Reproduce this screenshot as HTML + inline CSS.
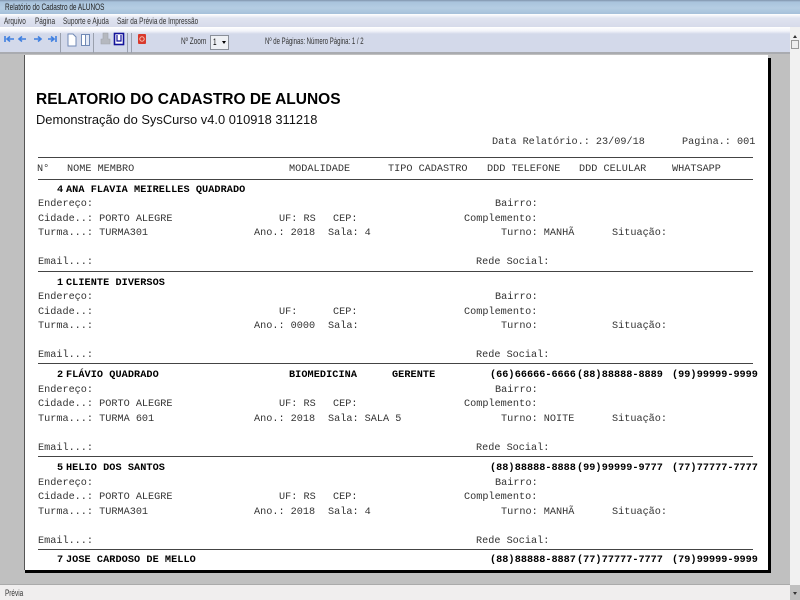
<!DOCTYPE html>
<html><head><meta charset="utf-8"><style>
html,body{margin:0;padding:0;width:800px;height:600px;overflow:hidden;background:#c0c0c0}
div,span{position:absolute}
.u{font:9.2px/12px "Liberation Sans",sans-serif;color:#333;white-space:pre;transform:scaleX(.7);transform-origin:0 0}
.m{font:10.2px/12px "Liberation Mono",monospace;color:#333;white-space:pre}
.r .m{transform:translateY(2px)}
.b{font-weight:bold;color:#000;letter-spacing:.07px}
.p{letter-spacing:0;word-spacing:-5.8px}
.l{height:1px;background:#444;left:13px;width:715px}
.r{left:0;top:0;width:744px;height:93px}
.sep{width:1px;height:20px;background:#9aa0ad;top:33px}
</style></head><body>
<div style="left:0;top:0;width:800px;height:14px;background:linear-gradient(#7f93ab 0,#a9c3dc 2px,#b5cde3 8px,#a5c0da 14px)"></div>
<span class="u" style="left:5px;top:1px;color:#222">Relatório do Cadastro de ALUNOS</span>
<div style="left:0;top:14px;width:800px;height:13px;background:linear-gradient(#fff,#e0e4f0 4px,#d6dbea)"></div>
<span class="u" style="left:4px;top:15px">Arquivo</span>
<span class="u" style="left:35px;top:15px">Página</span>
<span class="u" style="left:63px;top:15px">Suporte e Ajuda</span>
<span class="u" style="left:117px;top:15px">Sair da Prévia de Impressão</span>
<div style="left:0;top:27px;width:790px;height:25px;background:linear-gradient(#fff,#f2f4fa 4px,#d3d9ea 7px,#d3d9ea)"></div>
<div style="left:0;top:52px;width:790px;height:2px;background:#a9abb0"></div>
<svg style="position:absolute;left:0;top:30px" width="160" height="24">
<g fill="none" stroke="#3f7fe0" stroke-width="1.6">
<path d="M5 6V12M14 9H7M10 6.5L7 9l3 2.5"/>
<path d="M26 9H19M22 6.5L19 9l3 2.5"/>
<path d="M34 9H41M38 6.5L41 9l-3 2.5"/>
<path d="M48 9H54M51 6.5L54 9l-3 2.5M56 6V12"/></g>
<path d="M68 4h5l3 3v9h-8z" fill="#fff" stroke="#7089b5"/>
<rect x="81.500" y="4.500" width="4" height="11" fill="#fff" stroke="#7089b5"/><rect x="85.500" y="4.500" width="4" height="11" fill="#e4eaf6" stroke="#7089b5"/>
<path d="M103 3h5v6h2v5h-9V9h2z" fill="#b5b8bf" stroke="#a0a3aa" stroke-width=".6"/>
<rect x="114.500" y="3.500" width="9" height="11" fill="#fff" stroke="#12129a" stroke-width="1.600"/><path d="M117 5v6h4V5" fill="none" stroke="#12129a" stroke-width="1.200"/>
<rect x="138" y="4" width="8" height="10" rx="1" fill="#d8392c"/><circle cx="142" cy="9" r="2.200" fill="none" stroke="#f5c0b0"/>
</svg>
<div class="sep" style="left:60px"></div><div class="sep" style="left:93px"></div><div class="sep" style="left:127px"></div><div class="sep" style="left:131px"></div>
<span class="u" style="left:181px;top:35px">Nº Zoom</span>
<div style="left:210px;top:35px;width:17px;height:13px;background:#eef0f4;border:1px solid #8a8f99"></div>
<span class="u" style="left:213px;top:36px;color:#000">1</span>
<div style="left:222px;top:41px;width:0;height:0;border:2.500px solid transparent;border-top:3px solid #000"></div>
<span class="u" style="left:265px;top:35px;transform:scaleX(.655)">Nº de Páginas: Número Página: 1 / 2</span>
<div style="left:790px;top:27px;width:10px;height:558px;background:#f1f1f1"></div>
<div style="left:791px;top:40px;width:8px;height:9px;background:#eee;border:1px solid #999;box-sizing:border-box"></div>
<div style="left:793px;top:33px;width:0;height:0;border:2px solid transparent;border-bottom:3px solid #333"></div>
<div style="left:793px;top:592px;width:0;height:0;border:2px solid transparent;border-top:3px solid #333"></div>
<div style="left:0;top:54px;width:790px;height:530px;background:#c0c0c0"></div>
<div style="left:25px;top:58px;width:746px;height:515px;background:#000"></div>
<div style="left:24px;top:55px;width:744px;height:515px;background:#fff;border-left:1px solid #555;box-sizing:border-box;overflow:hidden" id="p">
<span style="left:11px;top:36px;font:bold 15.500px/18px 'Liberation Sans',sans-serif;color:#000;white-space:pre">RELATORIO DO CADASTRO DE ALUNOS</span>
<span style="left:11px;top:56px;font:12.900px/18px 'Liberation Sans',sans-serif;color:#111;white-space:pre">Demonstração do SysCurso v4.0 010918 311218</span>
<span class="m" style="left:467px;top:82px">Data Relatório.: 23/09/18</span>
<span class="m" style="left:657px;top:82px">Pagina.: 001</span>
<div class="l" style="top:102px"></div>
<span class="m" style="left:12px;top:109px">N°</span>
<span class="m" style="left:42px;top:109px">NOME MEMBRO</span>
<span class="m" style="left:264px;top:109px">MODALIDADE</span>
<span class="m" style="left:363px;top:109px">TIPO CADASTRO</span>
<span class="m" style="left:462px;top:109px">DDD TELEFONE</span>
<span class="m" style="left:554px;top:109px">DDD CELULAR</span>
<span class="m" style="left:647px;top:109px">WHATSAPP</span>
<div class="l" style="top:124px"></div>

<div class="r" style="top:128px">
<span class="m b" style="left:32px;top:0">4</span><span class="m b" style="left:41px;top:0">ANA FLAVIA MEIRELLES QUADRADO</span>
<span class="m" style="left:13px;top:14px">Endereço:</span><span class="m" style="left:470px;top:14px">Bairro:</span>
<span class="m" style="left:13px;top:29px">Cidade..: PORTO ALEGRE</span><span class="m" style="left:254px;top:29px">UF: RS</span><span class="m" style="left:308px;top:29px">CEP:</span><span class="m" style="left:439px;top:29px">Complemento:</span>
<span class="m" style="left:13px;top:43px">Turma...: TURMA301</span><span class="m" style="left:229px;top:43px">Ano.: 2018</span><span class="m" style="left:303px;top:43px">Sala: 4</span><span class="m" style="left:476px;top:43px">Turno: MANHÃ</span><span class="m" style="left:587px;top:43px">Situação:</span>
<span class="m" style="left:13px;top:72px">Email...:</span><span class="m" style="left:451px;top:72px">Rede Social:</span>
<div class="l" style="top:88px"></div></div>

<div class="r" style="top:221px">
<span class="m b" style="left:32px;top:0">1</span><span class="m b" style="left:41px;top:0">CLIENTE DIVERSOS</span>
<span class="m" style="left:13px;top:14px">Endereço:</span><span class="m" style="left:470px;top:14px">Bairro:</span>
<span class="m" style="left:13px;top:29px">Cidade..:</span><span class="m" style="left:254px;top:29px">UF:</span><span class="m" style="left:308px;top:29px">CEP:</span><span class="m" style="left:439px;top:29px">Complemento:</span>
<span class="m" style="left:13px;top:43px">Turma...:</span><span class="m" style="left:229px;top:43px">Ano.: 0000</span><span class="m" style="left:303px;top:43px">Sala:</span><span class="m" style="left:476px;top:43px">Turno:</span><span class="m" style="left:587px;top:43px">Situação:</span>
<span class="m" style="left:13px;top:72px">Email...:</span><span class="m" style="left:451px;top:72px">Rede Social:</span>
<div class="l" style="top:87px"></div></div>

<div class="r" style="top:313px">
<span class="m b" style="left:32px;top:0">2</span><span class="m b" style="left:41px;top:0">FLÁVIO QUADRADO</span><span class="m b" style="left:264px;top:0">BIOMEDICINA</span><span class="m b" style="left:367px;top:0">GERENTE</span>
<span class="m b p" style="left:465px;top:0">(66) 66666-6666</span><span class="m b p" style="left:552px;top:0">(88) 88888-8889</span><span class="m b p" style="left:647px;top:0">(99) 99999-9999</span>
<span class="m" style="left:13px;top:15px">Endereço:</span><span class="m" style="left:470px;top:15px">Bairro:</span>
<span class="m" style="left:13px;top:29px">Cidade..: PORTO ALEGRE</span><span class="m" style="left:254px;top:29px">UF: RS</span><span class="m" style="left:308px;top:29px">CEP:</span><span class="m" style="left:439px;top:29px">Complemento:</span>
<span class="m" style="left:13px;top:44px">Turma...: TURMA 601</span><span class="m" style="left:229px;top:44px">Ano.: 2018</span><span class="m" style="left:303px;top:44px">Sala: SALA 5</span><span class="m" style="left:476px;top:44px">Turno: NOITE</span><span class="m" style="left:587px;top:44px">Situação:</span>
<span class="m" style="left:13px;top:73px">Email...:</span><span class="m" style="left:451px;top:73px">Rede Social:</span>
<div class="l" style="top:88px"></div></div>

<div class="r" style="top:406px">
<span class="m b" style="left:32px;top:0">5</span><span class="m b" style="left:41px;top:0">HELIO DOS SANTOS</span>
<span class="m b p" style="left:465px;top:0">(88) 88888-8888</span><span class="m b p" style="left:552px;top:0">(99) 99999-9777</span><span class="m b p" style="left:647px;top:0">(77) 77777-7777</span>
<span class="m" style="left:13px;top:15px">Endereço:</span><span class="m" style="left:470px;top:15px">Bairro:</span>
<span class="m" style="left:13px;top:29px">Cidade..: PORTO ALEGRE</span><span class="m" style="left:254px;top:29px">UF: RS</span><span class="m" style="left:308px;top:29px">CEP:</span><span class="m" style="left:439px;top:29px">Complemento:</span>
<span class="m" style="left:13px;top:44px">Turma...: TURMA301</span><span class="m" style="left:229px;top:44px">Ano.: 2018</span><span class="m" style="left:303px;top:44px">Sala: 4</span><span class="m" style="left:476px;top:44px">Turno: MANHÃ</span><span class="m" style="left:587px;top:44px">Situação:</span>
<span class="m" style="left:13px;top:73px">Email...:</span><span class="m" style="left:451px;top:73px">Rede Social:</span>
<div class="l" style="top:88px"></div></div>

<div class="r" style="top:498px;height:17px">
<span class="m b" style="left:32px;top:0">7</span><span class="m b" style="left:41px;top:0">JOSE CARDOSO DE MELLO</span>
<span class="m b p" style="left:465px;top:0">(88) 88888-8887</span><span class="m b p" style="left:552px;top:0">(77) 77777-7777</span><span class="m b p" style="left:647px;top:0">(79) 99999-9999</span>
</div>
</div>
<div style="left:0;top:584px;width:790px;height:16px;background:#f0eeee;border-top:1px solid #aaa;box-sizing:border-box"></div>
<span class="u" style="left:5px;top:587px">Prévia</span>
</body></html>
